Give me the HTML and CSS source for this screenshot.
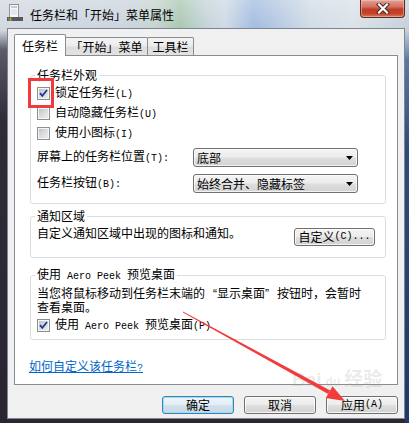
FILE: index.html
```html
<!DOCTYPE html>
<html lang="zh-CN">
<head>
<meta charset="utf-8">
<title>任务栏和「开始」菜单属性</title>
<link rel="stylesheet" href="styles.css">
</head>
<body>
<div class="window">
  <div class="titlebar">
    <svg class="app-icon" width="16" height="18" viewBox="0 0 16 18">
      <rect x="2.5" y="0.5" width="9" height="14" fill="#f7f8fa" stroke="#8c949e"/>
      <rect x="4" y="2" width="6" height="2" fill="#c3ccd6"/>
      <line x1="4" y1="6" x2="10" y2="6" stroke="#cfd5dc"/>
      <line x1="4" y1="8" x2="10" y2="8" stroke="#cfd5dc"/>
      <line x1="4" y1="10" x2="10" y2="10" stroke="#cfd5dc"/>
      <rect x="0" y="13" width="16" height="4" fill="#55595f"/>
      <rect x="1" y="13.6" width="1.6" height="1.4" fill="#f05a28"/>
      <rect x="2.8" y="13.6" width="1.6" height="1.4" fill="#7cbb00"/>
      <rect x="1" y="15.2" width="1.6" height="1.4" fill="#00a1f1"/>
      <rect x="2.8" y="15.2" width="1.6" height="1.4" fill="#ffbb00"/>
    </svg>
    <span class="title">任务栏和「开始」菜单属性</span>
    <div class="close">
      <svg width="14" height="11" viewBox="0 0 14 11">
        <path d="M3 1.5 L11 9.5 M11 1.5 L3 9.5" stroke="#3b2424" stroke-width="4" stroke-linecap="square"/>
        <path d="M3 1.5 L11 9.5 M11 1.5 L3 9.5" stroke="#ffffff" stroke-width="2.2" stroke-linecap="square"/>
      </svg>
    </div>
  </div>

  <div class="client">
    <div class="tabs">
      <div class="tab active">任务栏</div>
      <div class="tab tab-start">「开始」菜单</div>
      <div class="tab tab-tools">工具栏</div>
    </div>

    <div class="panel">
      <fieldset class="group g-appearance">
        <legend>任务栏外观</legend>
        <div class="check-row">
          <span class="cb"><svg width="11" height="11" viewBox="0 0 11 11"><path d="M2 5.2 L4.3 7.8 L9 2" fill="none" stroke="#1f3a92" stroke-width="1.8"/></svg></span>
          <span>锁定任务栏<span class="en">(L)</span></span>
        </div>
        <div class="check-row">
          <span class="cb"></span>
          <span>自动隐藏任务栏<span class="en">(U)</span></span>
        </div>
        <div class="check-row">
          <span class="cb"></span>
          <span>使用小图标<span class="en">(I)</span></span>
        </div>
        <div class="select-row first">
          <span class="label">屏幕上的任务栏位置<span class="en">(T):</span></span>
          <div class="select"><span>底部</span><svg class="drop" width="7" height="4" viewBox="0 0 7 4"><path d="M0 0 H7 L3.5 4 Z" fill="#000"/></svg></div>
        </div>
        <div class="select-row second">
          <span class="label">任务栏按钮<span class="en">(B):</span></span>
          <div class="select"><span>始终合并、隐藏标签</span><svg class="drop" width="7" height="4" viewBox="0 0 7 4"><path d="M0 0 H7 L3.5 4 Z" fill="#000"/></svg></div>
        </div>
      </fieldset>

      <fieldset class="group g-notify">
        <legend>通知区域</legend>
        <div class="notify-row">
          <span class="notify-text">自定义通知区域中出现的图标和通知。</span>
          <div class="btn btn-custom">自定义<span class="en">(C)...</span></div>
        </div>
      </fieldset>

      <fieldset class="group g-peek">
        <legend>使用<span class="en"> Aero Peek </span>预览桌面</legend>
        <p class="peek-text">当您将鼠标移动到任务栏末端的<span class="fw fw-open">“</span>显示桌面<span class="fw fw-close">”</span>按钮时，会暂时<br>查看桌面。</p>
        <div class="check-row">
          <span class="cb"><svg width="11" height="11" viewBox="0 0 11 11"><path d="M2 5.2 L4.3 7.8 L9 2" fill="none" stroke="#1f3a92" stroke-width="1.8"/></svg></span>
          <span>使用<span class="en"> Aero Peek </span>预览桌面<span class="en">(P)</span></span>
        </div>
      </fieldset>

      <a class="help-link" href="#">如何自定义该任务栏<span class="en">?</span></a>
    </div>

    <div class="buttons">
      <div class="btn default">确定</div>
      <div class="btn">取消</div>
      <div class="btn">应用<span class="en">(A)</span></div>
    </div>
  </div>

  <div class="highlight"></div>
  <div class="watermark">Bai<span class="wm-paw">du</span>经验</div>
  <svg class="annotation" width="409" height="423" viewBox="0 0 409 423">
    <polygon points="183,311.5 183,312.5 328.2,394 330.2,390.6" fill="#f23b3b"/>
    <polygon points="345,401 325.8,398 332.6,386.2" fill="#f23b3b"/>
  </svg>
</div>
</body>
</html>
```

FILE: styles.css
```css
* {
  box-sizing: border-box;
}

html,
body {
  margin: 0;
  padding: 0;
}

body {
  width: 409px;
  height: 423px;
  overflow: hidden;
  font-family: "Noto Sans CJK SC", "Noto Sans", sans-serif;
  font-size: 12px;
  line-height: 14px;
  color: #000;
  background: #2b2833;
}

.en {
  font-family: "Liberation Mono", "DejaVu Sans Mono", monospace;
  font-size: 10px;
}

.window {
  position: relative;
  width: 409px;
  height: 423px;
  display: flex;
  flex-direction: column;
  background:
    linear-gradient(to bottom, rgba(0, 0, 0, 0) 0, rgba(0, 0, 0, 0) 30px, #5b5a66 50px, #2f2c38 120px, #2a2431 100%) left top / 7px 100% no-repeat,
    linear-gradient(to bottom, rgba(0, 0, 0, 0) 0, rgba(0, 0, 0, 0) 30px, #5a78a6 60px, #2c4b7d 150px, #1f3866 100%) right top / 4px 100% no-repeat,
    linear-gradient(#2b2833, #2b2833) left bottom / 100% 4px no-repeat,
    linear-gradient(to bottom, rgba(255, 255, 255, 0.25), rgba(255, 255, 255, 0) 28px),
    linear-gradient(to right, #d2d9e1 0%, #ccd4dd 30%, #c6d4cf 38%, #aac8b2 44%, #c3d3d6 50%, #cfdae6 55%, #a3bde0 62%, #b6c9e2 68%, #d2dce6 76%, #dbe2e9 86%, #c6d0db 100%);
}

/* ---------- title bar ---------- */
.titlebar {
  height: 28px;
  flex: none;
  display: flex;
  align-items: flex-start;
}

.app-icon {
  flex: none;
  margin: 4px 0 0 7px;
}

.title {
  margin: 8px 0 0 7px;
  font-size: 12px;
  line-height: 14px;
  color: #000;
}

.close {
  margin-left: auto;
  margin-right: 4px;
  width: 45px;
  height: 18px;
  border: 1px solid #5a2a24;
  border-top: 0;
  border-radius: 0 0 4px 4px;
  background: linear-gradient(to bottom, #e3a296 0%, #d2705f 40%, #c23b25 55%, #c5432b 80%, #d87a5e 100%);
  box-shadow: inset 0 0 0 1px rgba(255, 210, 200, 0.45);
  display: flex;
  align-items: center;
  justify-content: center;
}

/* ---------- client area ---------- */
.client {
  margin-left: 7px;
  width: 398px;
  height: 391px;
  flex: none;
  border: 1px solid #7d8794;
  background: #f0f0f0;
  display: flex;
  flex-direction: column;
  padding: 5px 6px 0;
}

.tabs {
  height: 21px;
  flex: none;
  display: flex;
  align-items: flex-end;
}

.tab {
  height: 18px;
  border: 1px solid #898c95;
  border-bottom: 0;
  margin-left: -1px;
  background: linear-gradient(to bottom, #f4f4f4 0%, #ececec 48%, #dddddd 52%, #e2e2e2 100%);
  border-radius: 2px 2px 0 0;
  text-align: center;
  line-height: 17px;
}

.tab.active {
  width: 52px;
  height: 22px;
  margin-left: 0;
  margin-bottom: -1px;
  background: #fff;
  line-height: 21px;
  z-index: 1;
}

.tab-start {
  width: 83px;
}

.tab-tools {
  width: 47px;
}

.panel {
  height: 330px;
  flex: none;
  border: 1px solid #898c95;
  background: #fff;
  padding: 12px 11px 0 15px;
  overflow: hidden;
}

/* ---------- group boxes ---------- */
.group {
  margin: 0;
  min-width: 0;
  border: 1px solid #d5dfe5;
  border-radius: 3px;
  padding: 0 10px 0 6px;
}

.group legend {
  padding: 0 2px;
  margin-left: -2px;
  line-height: 14px;
}

.g-appearance {
  padding-top: 1px;
  padding-bottom: 10px;
}

.g-notify {
  margin-top: 5px;
  padding-bottom: 11px;
}

.g-peek {
  margin-top: 9px;
  padding-top: 3px;
  padding-bottom: 4px;
}

.check-row {
  height: 20px;
  display: flex;
  align-items: center;
  white-space: nowrap;
}

.cb {
  flex: none;
  width: 13px;
  height: 13px;
  margin-right: 5px;
  border: 1px solid #8e8f8f;
  background: linear-gradient(135deg, #b8bdc3 0%, #dadcdf 50%, #f0f0f1 100%);
  box-shadow: inset 0 0 0 1px #f6f6f6;
}

.cb svg {
  display: block;
}

.select-row {
  height: 19px;
  display: flex;
  align-items: center;
  white-space: nowrap;
}

.select-row.first {
  margin-top: 5px;
}

.select-row.second {
  margin-top: 7px;
}

.select-row .label {
  width: 156px;
  flex: none;
}

.select {
  width: 165px;
  height: 19px;
  flex: none;
  border: 1px solid #707070;
  border-radius: 3px;
  background: linear-gradient(to bottom, #f4f4f4 0%, #ececec 48%, #dedede 52%, #d3d3d3 100%);
  box-shadow: inset 0 0 0 1px rgba(255, 255, 255, 0.7);
  display: flex;
  align-items: center;
  justify-content: space-between;
  padding: 0 4px 0 3px;
  line-height: 14px;
}

.drop {
  display: block;
  flex: none;
}

.notify-row {
  display: flex;
  align-items: flex-start;
  justify-content: space-between;
  white-space: nowrap;
}

.notify-text {
  margin-top: 3px;
}

.btn {
  width: 72px;
  height: 18px;
  border: 1px solid #707070;
  border-radius: 3px;
  background: linear-gradient(to bottom, #f4f4f4 0%, #ececec 48%, #dedede 52%, #d2d2d2 100%);
  box-shadow: inset 0 0 0 1px rgba(255, 255, 255, 0.75);
  display: flex;
  align-items: center;
  justify-content: center;
  line-height: 14px;
  white-space: nowrap;
}

.btn-custom {
  width: 81px;
  margin-top: 5px;
}

.btn.default {
  border-color: #3c7fb1;
  background: linear-gradient(to bottom, #eef5f9 0%, #e3eef5 48%, #d2e2ec 52%, #c5d8e5 100%);
  box-shadow: inset 0 0 0 1px #9fdcf7;
}

.peek-text {
  margin: 0;
  font-family: "Liberation Sans", "Noto Sans CJK SC", sans-serif;
  line-height: 14px;
  white-space: nowrap;
}

.fw {
  display: inline-block;
  width: 12px;
}

.fw-open {
  text-align: right;
}

.fw-close {
  text-align: left;
}

.help-link {
  display: block;
  width: fit-content;
  margin: 19px 0 0 -1px;
  color: #0066cc;
  text-decoration: underline;
  line-height: 14px;
}

.buttons {
  margin-top: 11px;
  display: flex;
  justify-content: flex-end;
  gap: 10px;
}

/* ---------- annotations (overlays) ---------- */
.highlight {
  position: absolute;
  left: 28px;
  top: 78px;
  width: 26px;
  height: 30px;
  border: 3px solid #ef3b3b;
  pointer-events: none;
}

.annotation {
  position: absolute;
  left: 0;
  top: 0;
  pointer-events: none;
}

.watermark {
  position: absolute;
  left: 292px;
  top: 370px;
  font-family: "Liberation Sans", "Noto Sans CJK SC", sans-serif;
  font-size: 19px;
  line-height: 20px;
  font-weight: bold;
  color: rgba(160, 160, 160, 0.22);
  pointer-events: none;
}

.wm-paw {
  font-size: 12px;
  margin: 0 4px;
}
```
